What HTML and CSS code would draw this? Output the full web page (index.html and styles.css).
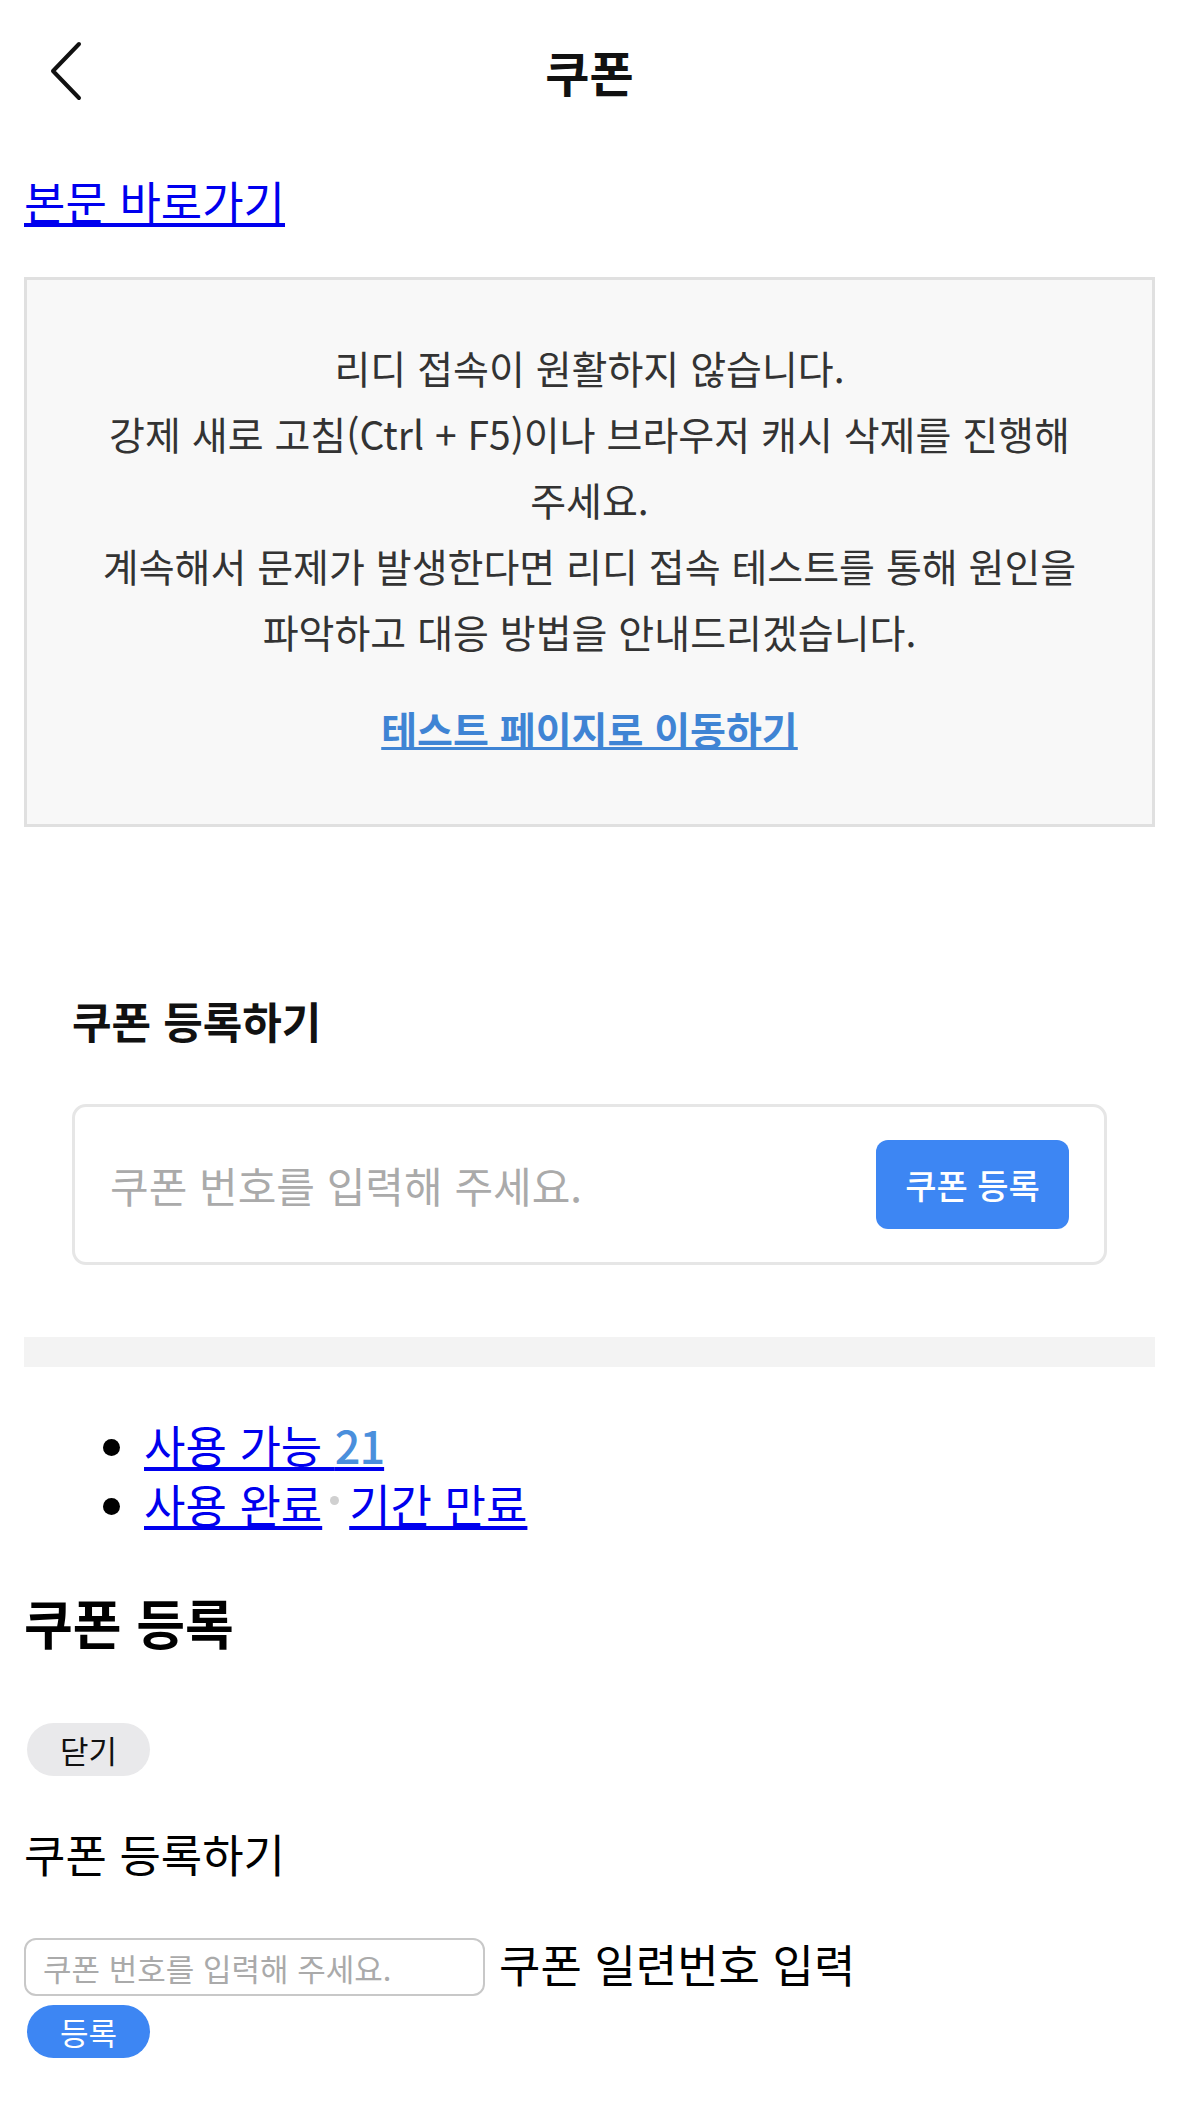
FILE: index.html
```html
<!DOCTYPE html>
<html lang="ko">
<head>
    <meta charset="UTF-8">
    <meta name="viewport" content="width=device-width, initial-scale=1.0">
    <title>쿠폰</title>
    <link rel="stylesheet" href="styles.css">
</head>
<body>
    <header class="topbar">
        <button class="back-btn" type="button" aria-label="뒤로 가기">
            <svg width="36" height="62" viewBox="0 0 36 62" fill="none">
                <path d="M31 4 L5 31 L31 58" stroke="#111" stroke-width="4" stroke-linecap="round" stroke-linejoin="round"/>
            </svg>
        </button>
        <h1 class="topbar-title">쿠폰</h1>
        <span></span>
    </header>

    <a class="skip-link" href="#main">본문 바로가기</a>

    <div class="notice">
        <p>리디 접속이 원활하지 않습니다.<br>강제 새로 고침(Ctrl + F5)이나 브라우저 캐시 삭제를 진행해 주세요.<br>계속해서 문제가 발생한다면 리디 접속 테스트를 통해 원인을 파악하고 대응 방법을 안내드리겠습니다.</p>
        <a class="notice-link" href="#">테스트 페이지로 이동하기</a>
    </div>

    <section class="register" id="main">
        <h2>쿠폰 등록하기</h2>
        <form class="register-card">
            <input type="text" placeholder="쿠폰 번호를 입력해 주세요.">
            <button type="button">쿠폰 등록</button>
        </form>
    </section>

    <div class="divider"></div>

    <ul class="tabs">
        <li><a href="#">사용 가능 <span class="count">21</span></a></li>
        <li><a href="#">사용 완료</a><span class="dot"></span><a href="#">기간 만료</a></li>
    </ul>

    <h3 class="modal-title">쿠폰 등록</h3>
    <button class="pill-btn close-btn" type="button">닫기</button>
    <p class="modal-sub">쿠폰 등록하기</p>
    <div class="code-row">
        <input class="code-input" id="code" type="text" placeholder="쿠폰 번호를 입력해 주세요.">
        <label for="code">쿠폰 일련번호 입력</label>
    </div>
    <button class="pill-btn submit-btn" type="button">등록</button>
</body>
</html>
```

FILE: styles.css
```css
* {
    font-family: "Noto Sans CJK KR", "Noto Sans", sans-serif;
    box-sizing: border-box;
}

body {
    margin: 0 24px;
    color: #000;
    background: #fff;
    word-break: keep-all;
}

.topbar {
    height: 142px;
    display: grid;
    grid-template-columns: 1fr auto 1fr;
    align-items: center;
}

.back-btn {
    justify-self: start;
    border: none;
    background: none;
    padding: 0;
    margin-left: 24px;
    display: flex;
}

.topbar-title {
    margin: 0;
    font-size: 48px;
    font-weight: 700;
    color: #111;
}

.skip-link {
    display: block;
    width: fit-content;
    margin-top: 30px;
    font-size: 45px;
    line-height: 58px;
    color: #0000ee;
}

.notice {
    margin-top: 47px;
    border: 3px solid #e0e0e0;
    background: #f8f8f8;
    padding: 54px 52px 63px;
    text-align: center;
}

.notice p {
    margin: 0;
    font-size: 39px;
    line-height: 66px;
    color: #333;
}

.notice-link {
    display: inline-block;
    margin-top: 31px;
    font-size: 39px;
    line-height: 66px;
    font-weight: 700;
    color: #3f84d4;
}

.register {
    padding: 163px 48px 72px;
}

.register h2 {
    margin: 0;
    font-size: 43px;
    line-height: 60px;
    font-weight: 700;
    color: #111;
}

.register-card {
    margin-top: 54px;
    height: 161px;
    border: 3px solid #e6e6e6;
    border-radius: 14px;
    padding: 0 35px;
    display: flex;
    align-items: center;
    gap: 20px;
}

.register-card input {
    flex: 1;
    min-width: 0;
    border: none;
    outline: none;
    padding: 0;
    font-size: 42px;
    color: #333;
    background: transparent;
}

.register-card input::placeholder {
    color: #aaa;
}

.register-card button {
    width: 193px;
    height: 89px;
    border: none;
    border-radius: 12px;
    background: #3d86f3;
    color: #fff;
    font-size: 34px;
    font-weight: 500;
}

.divider {
    height: 30px;
    background: #f3f3f3;
}

.tabs {
    margin: 48px 0;
    padding-left: 120px;
    font-size: 45px;
    line-height: 59px;
}

.tabs a {
    color: #0000ee;
}

.tabs .count {
    color: #4a8fdc;
    font-weight: 500;
    letter-spacing: -1px;
}

.dot {
    display: inline-block;
    width: 9px;
    height: 9px;
    margin: 0 10px 0 8px;
    border-radius: 50%;
    background: #d0d0d0;
    vertical-align: 18px;
}

.modal-title {
    margin: 56px 0 67px;
    font-size: 53px;
    line-height: 67px;
    font-weight: 700;
}

.pill-btn {
    display: block;
    width: 123px;
    height: 53px;
    margin-left: 3px;
    border: none;
    border-radius: 27px;
    font-size: 31px;
    padding: 0;
}

.close-btn {
    background: #e9e9eb;
    color: #111;
}

.modal-sub {
    margin: 49px 0 55px;
    font-size: 45px;
    line-height: 58px;
}

.code-row {
    display: flex;
    align-items: flex-start;
    gap: 14px;
}

.code-input {
    width: 461px;
    height: 58px;
    border: 2px solid #c8c8c8;
    border-radius: 12px;
    padding: 0 17px;
    font-size: 31px;
}

.code-input::placeholder {
    color: #aaa;
}

.code-row label {
    font-size: 45px;
    line-height: 52px;
}

.submit-btn {
    margin-top: 9px;
    background: #3d86f3;
    color: #fff;
}
```
